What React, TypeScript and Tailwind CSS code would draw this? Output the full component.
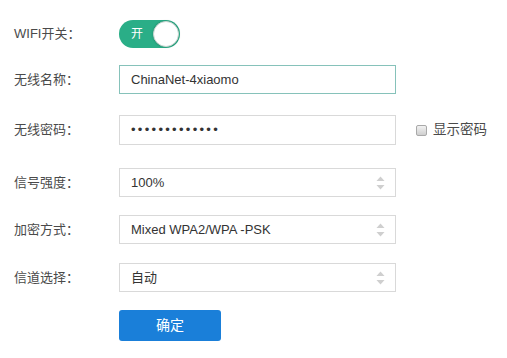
import { useState } from 'react';

const font = { fontFamily: '"Liberation Sans", "Noto Sans CJK SC", sans-serif' };

function Arrows() {
  return (
    <svg width="9" height="14" viewBox="0 0 9 14" className="absolute right-[10px] top-1/2 -translate-y-1/2">
      <path d="M4.5 0.5 L8.5 5 L0.5 5 Z" fill="#cfcfcf" />
      <path d="M0.5 9 L8.5 9 L4.5 13.5 Z" fill="#cfcfcf" />
    </svg>
  );
}

function Label({ children }: { children: React.ReactNode }) {
  return <div className="w-[119px] shrink-0 pl-[14px] text-[13px] text-[#4a4a4a]">{children}</div>;
}

function SelectBox({ value }: { value: string }) {
  return (
    <div className="relative flex h-[29px] w-[277px] items-center border border-[#d9d9d9] bg-white pl-[11px] text-[13px] text-[#333]">
      {value}
      <Arrows />
    </div>
  );
}

export default function App() {
  const [on, setOn] = useState(true);
  const [showPwd, setShowPwd] = useState(false);

  return (
    <div className="h-[358px] w-[507px] bg-white pt-[20px]" style={font}>
      {/* WIFI switch */}
      <div className="flex items-center">
        <Label>WIFI开关：</Label>
        <button
          onClick={() => setOn(!on)}
          className="relative flex h-[28px] w-[61px] items-center rounded-full bg-[#2aae87] pl-[12px] text-[12px] text-white"
        >
          {on ? '开' : '关'}
          <span className="absolute right-[1px] top-[1px] h-[26px] w-[26px] rounded-full border border-[#c9d6d2] bg-white shadow-[0_0_2px_rgba(0,0,0,0.25)]" />
        </button>
      </div>

      {/* SSID */}
      <div className="mt-[17px] flex items-center">
        <Label>无线名称：</Label>
        <div className="flex h-[29px] w-[277px] items-center border border-[#86c2ba] bg-white pl-[11px] text-[13px] text-[#333]">
          ChinaNet-4xiaomo
        </div>
      </div>

      {/* Password */}
      <div className="mt-[21px] flex items-center">
        <Label>无线密码：</Label>
        <div className="flex h-[30px] w-[277px] items-center border border-[#d9d9d9] bg-white pl-[11px] text-[13px] tracking-[2.3px] text-[#333]">
          {showPwd ? '12345678abcde' : '•••••••••••••'}
        </div>
        <label className="ml-[20px] flex items-center gap-[6px] text-[13.5px] text-[#4a4a4a]">
          <span
            onClick={() => setShowPwd(!showPwd)}
            className="h-[11px] w-[11px] rounded-[2px] border border-[#a9a9a9] bg-gradient-to-b from-[#f2f2f2] to-[#cfcfcf]"
          />
          显示密码
        </label>
      </div>

      {/* Signal */}
      <div className="mt-[23px] flex items-center">
        <Label>信号强度：</Label>
        <SelectBox value="100%" />
      </div>

      <div className="mt-[18px] flex items-center">
        <Label>加密方式：</Label>
        <SelectBox value="Mixed WPA2/WPA -PSK" />
      </div>

      <div className="mt-[19px] flex items-center">
        <Label>信道选择：</Label>
        <SelectBox value="自动" />
      </div>

      <div className="mt-[18px] pl-[119px]">
        <button className="h-[31px] w-[102px] rounded-[3px] bg-[#1a7fd9] text-[14px] text-white">确定</button>
      </div>
    </div>
  );
}
